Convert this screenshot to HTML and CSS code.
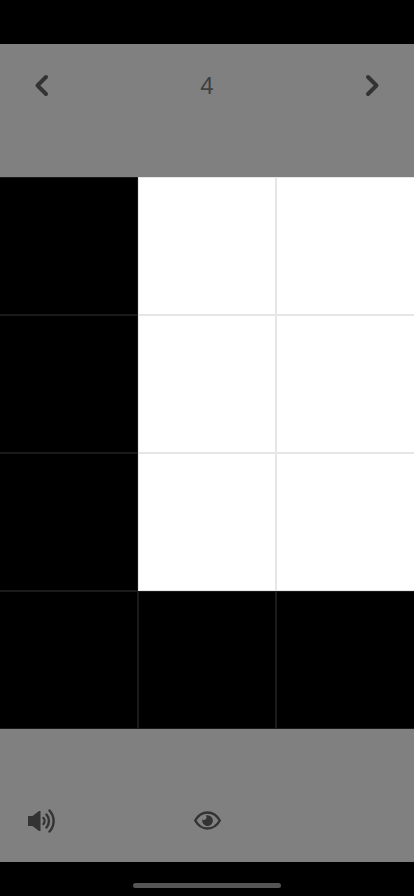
FILE: index.html
```html
<!DOCTYPE html>
<html lang="en">
<head>
<meta charset="utf-8">
<title>Grid</title>
<link rel="stylesheet" href="styles.css">
</head>
<body>
<main class="screen">
  <div class="status"></div>
  <header class="bar top-bar">
    <svg class="chev" viewBox="0 0 14 24" aria-hidden="true"><path d="M11.500 3 3 11.500 11.500 20"/></svg>
    <span class="num">4</span>
    <svg class="chev" viewBox="0 0 14 24" aria-hidden="true"><path d="M2.500 3 11 11.500 2.500 20"/></svg>
  </header>
  <section class="grid">
    <div class="cell k"></div><div class="cell w"></div><div class="cell w"></div>
    <div class="cell k"></div><div class="cell w"></div><div class="cell w"></div>
    <div class="cell k"></div><div class="cell w"></div><div class="cell w"></div>
    <div class="cell k"></div><div class="cell k"></div><div class="cell k"></div>
  </section>
  <footer class="bar bottom-bar">
    <svg class="tool" viewBox="0 0 27 24" aria-hidden="true">
      <path class="fill" d="M0 7h4.500L11 2h1.500v20H11L4.500 17H0z"/>
      <path class="line" d="M15.500 9c1.400 1.600 1.400 4.400 0 6M18.500 5.500c3.200 3.600 3.200 9.400 0 13M21.500 1.500c5.500 6 5.500 15 0 21"/>
    </svg>
    <svg class="tool" viewBox="0 0 27 24" aria-hidden="true">
      <path class="eye" d="M1.200 11.500C4 6.500 8.500 3.500 13.500 3.500s9.500 3 12.300 8c-2.800 5-7.300 8-12.300 8s-9.500-3-12.300-8z"/>
      <path class="fill" d="M13.500 6.200a5.400 5.400 0 1 1-5.200 4 2.500 2.500 0 0 0 3.500-3.700c.5-.2 1.100-.3 1.700-.3z"/>
    </svg>
    <span class="tool"></span>
  </footer>
  <div class="home-zone"><span class="home"></span></div>
</main>
</body>
</html>
```
FILE: styles.css
```css
* { box-sizing: border-box; }
html, body { margin: 0; padding: 0; background: #000; }
.screen { width: 414px; height: 896px; display: flex; flex-direction: column; overflow: hidden; background: #000; }
.status { height: 44px; }
.bar { height: 133px; background: #808080; display: flex; justify-content: space-between; padding: 0 28px; }
.top-bar { align-items: flex-start; padding-top: 30px; }
.bottom-bar { align-items: flex-end; padding-bottom: 29px; }
.chev { width: 27px; height: 24px; fill: none; stroke: #333; stroke-width: 4; stroke-linecap: round; stroke-linejoin: round; }
.num { width: 27px; height: 24px; text-align: center; font: 400 24px/24px "Liberation Sans", sans-serif; color: #404040; }
.grid { display: grid; grid-template-columns: repeat(3, 138px); grid-auto-rows: 138px; }
.cell { border: 1px solid rgba(128,128,128,.2); }
.cell:nth-child(3n) { border-right: 0; }
.cell:nth-child(3n+1) { border-left: 0; }
.k { background: #000; }
.w { background: #fff; }
.tool { width: 27px; height: 24px; display: block; }
.fill { fill: #333; }
.line, .eye { fill: none; stroke: #333; stroke-width: 2.4; stroke-linecap: round; }
.home-zone { flex: 1; display: flex; justify-content: center; align-items: flex-end; padding-bottom: 8px; }
.home { width: 148px; height: 5px; border-radius: 3px; background: #555; }
```
